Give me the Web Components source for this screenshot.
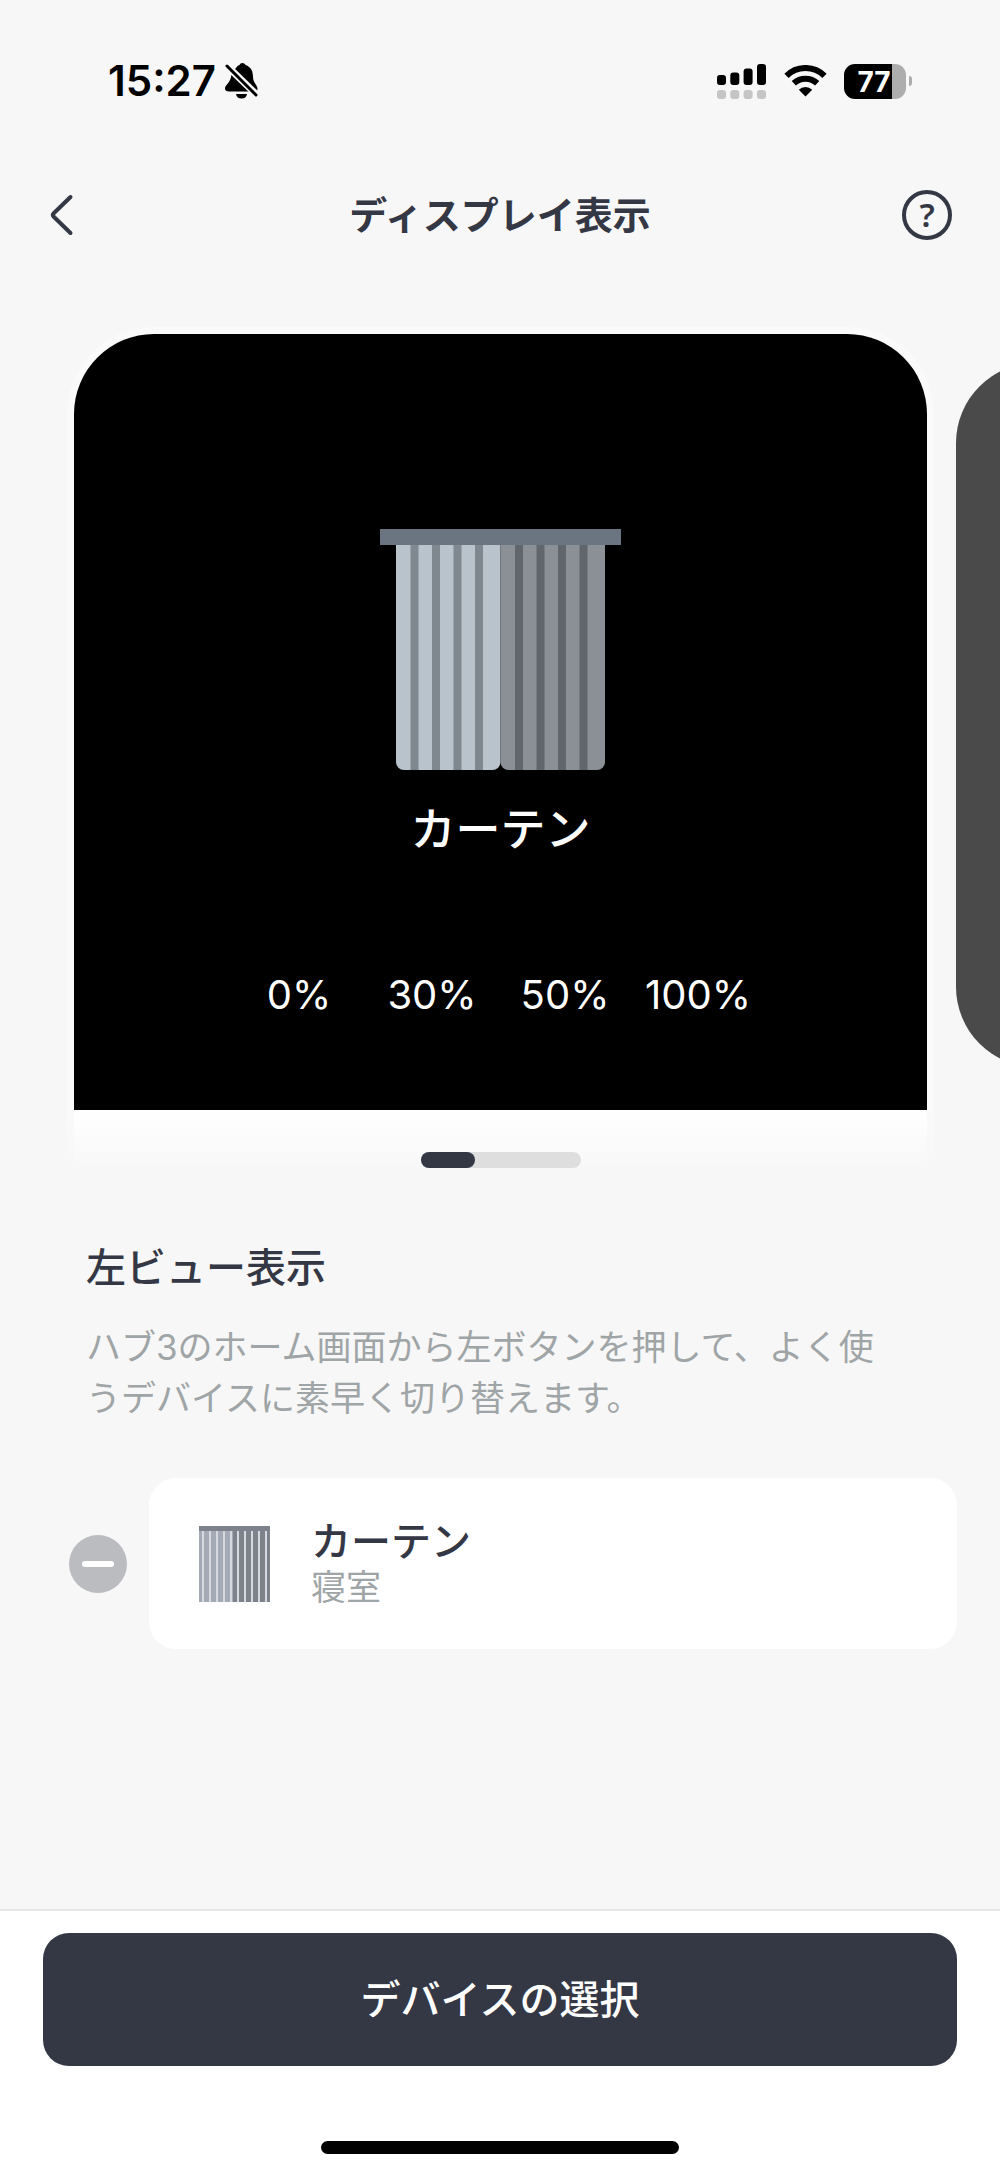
<!DOCTYPE html>
<html lang="ja">
<head>
<meta charset="utf-8">
<meta name="viewport" content="width=device-width, initial-scale=1">
<title>ディスプレイ表示</title>
<style>
  html, body { margin: 0; background: #f7f7f7; }
  body { font-family: Inter, "Noto Sans CJK JP", sans-serif; color: #343845; }
</style>
</head>
<body>
<display-screen></display-screen>
<script>
const define = (name, html) => customElements.define(name, class extends HTMLElement {
  constructor() {
    super();
    this.attachShadow({ mode: "open" }).innerHTML =
      "<style>*{box-sizing:border-box}svg{display:block}button{font:inherit;color:inherit;border:0;background:none;padding:0;margin:0}</style>" + html;
  }
});

define("status-bar", `
  <style>
    :host { display: flex; align-items: center; justify-content: space-between; height: 162px; padding: 0 88px 0 108px; color: #000; }
    .time, .signals { display: flex; align-items: center; }
    .time { font-size: 42px; font-weight: 600; line-height: 48px; gap: 9px; }
    .signals { gap: 17px; }
    .battery { display: flex; align-items: center; gap: 3px; }
    .level { width: 62px; height: 35px; padding-right: 2px; border-radius: 11px; color: #fff; font-size: 28px; font-weight: 700; line-height: 36px; text-align: center; background: linear-gradient(90deg, #000 48px, #adadad 48px); }
    .nub { width: 3px; height: 10px; border-radius: 0 5px 5px 0; background: #adadad; }
  </style>
  <div class="time"><span>15:27</span>
    <svg width="34" height="36" viewBox="0 0 34 36" aria-hidden="true">
      <path d="M11 5C12 3 14 2.300 14.500 2C15 .8 16 0 17.500 0S20 1 20.500 2C26 4 28 8 28 14C28 20 32.500 21.500 32.500 26C32.500 28 31 28.500 29 28.500H4C1.500 28.500 0 27.500 0 25.500C0 22 5 20 6 14C6 11 8 7 11 5Z"/>
      <path d="M11 31H22C21.500 34 19.500 35.500 16.500 35.500S11.500 34 11 31Z"/>
      <path d="M0 1L33 33" stroke="#f7f7f7" stroke-width="7"/>
      <path d="M2 3L31 32" stroke="#000" stroke-width="3" stroke-linecap="round"/>
    </svg>
  </div>
  <div class="signals">
    <svg width="50" height="35" viewBox="0 0 50 35" aria-hidden="true">
      <rect y="11" width="9" height="10" rx="3"/><rect x="13.300" y="8.500" width="9" height="12.500" rx="3"/><rect x="26.600" y="4.500" width="9" height="16.500" rx="3"/><rect x="40" width="9" height="21" rx="3"/>
      <g fill="#c5c5c5"><rect y="26" width="9" height="9" rx="3"/><rect x="13.300" y="26" width="9" height="9" rx="3"/><rect x="26.600" y="26" width="9" height="9" rx="3"/><rect x="40" y="26" width="9" height="9" rx="3"/></g>
    </svg>
    <svg width="43" height="32" viewBox="0 0 43 32" aria-hidden="true">
      <path d="M2.500 10.800A27 27 0 0 1 40.500 10.800M9.800 18.300A17 17 0 0 1 33.200 18.300" fill="none" stroke="#000" stroke-width="6"/>
      <path d="M21.500 31.500L14.800 24.800A9.500 9.500 0 0 1 28.200 24.800Z"/>
    </svg>
    <div class="battery"><div class="level">77</div><div class="nub"></div></div>
  </div>`);

define("nav-header", `
  <style>
    :host { display: grid; grid-template-columns: 50px 1fr 50px; align-items: center; height: 106px; padding: 0 48px; }
    h1 { margin: 0; font-size: 38px; font-weight: 600; line-height: 56px; text-align: center; }
    button { width: 50px; height: 50px; display: flex; align-items: center; }
    .help { justify-content: center; border: 4px solid #343845; border-radius: 50%; font-family: "Noto Sans", sans-serif; font-size: 33px; line-height: 42px; font-weight: 600; }
  </style>
  <button aria-label="戻る"><svg width="26" height="42" viewBox="0 0 26 42" aria-hidden="true"><path d="M22.500 3L5.500 19.500Q4 21 5.500 22.500L22.500 39" fill="none" stroke="#343845" stroke-width="4" stroke-linecap="round" stroke-linejoin="round"/></svg></button>
  <h1><slot></slot></h1>
  <button class="help">?</button>`);

define("curtain-art", `
  <style>:host { display: block; }</style>
  <svg width="241" height="241" viewBox="0 0 241 241" aria-hidden="true">
    <path d="M16 16H120.500V233a8 8 0 0 1-8 8H24a8 8 0 0 1-8-8Z" fill="#b9c3cc"/>
    <path d="M120.500 16H225V233a8 8 0 0 1-8 8H128.500a8 8 0 0 1-8-8Z" fill="#8b9097"/>
    <path d="M30.500 16h8v225h-8zM52 16h8v225h-8zM73.500 16h8v225h-8zM95 16h8v225h-8z" fill="#7f888f"/>
    <path d="M135 16h8v225h-8zM156.500 16h8v225h-8zM178 16h8v225h-8zM199.500 16h8v225h-8z" fill="#60666c"/>
    <path d="M0 0H241V16H0Z" fill="#6b7582"/>
  </svg>`);

define("curtain-icon", `
  <style>:host { display: block; }</style>
  <svg width="71" height="76" viewBox="0 0 71 76" aria-hidden="true">
    <path d="M0 0H36V76H0Z" fill="#a5abb6"/><path d="M34 0H71V76H34Z" fill="#7d828b"/>
    <path d="M3 4h2v72h-2zM10 4h2v72h-2zM17 4h2v72h-2zM24 4h2v72h-2zM31 4h2v72h-2zM38 4h2v72h-2zM45 4h2v72h-2zM52 4h2v72h-2zM59 4h2v72h-2zM66 4h2v72h-2z" fill="#d6dae0"/>
    <path d="M0 0H71V5H0Z" fill="#7d828c"/>
  </svg>`);

define("view-carousel", `
  <style>
    :host { display: flex; align-items: flex-start; gap: 22px; overflow: hidden; padding: 59px 0 0 67px; }
    .frame { flex: 0 0 auto; width: calc(100% - 66px); padding: 7px 7px 0; border-radius: 87px 87px 0 0; background: linear-gradient(#fafafa 780px, #f7f7f7); }
    .panel { height: 776px; padding-top: 195px; border-radius: 80px 80px 0 0; background: #000; color: #fff; display: flex; flex-direction: column; align-items: center; }
    h2 { margin: 26px 0 0; font-size: 45px; line-height: 68px; font-weight: 500; }
    ul { list-style: none; margin: 106px 0 0; padding: 0 4px 0 0; display: grid; grid-template-columns: repeat(4, 133px); justify-items: center; font-size: 40px; line-height: 50px; }
    .fade { height: 62px; padding-top: 42px; background: linear-gradient(#fff, #f7f7f7); }
    .track { width: 160px; height: 16px; margin: 0 auto; border-radius: 8px; background: #dedede; }
    .thumb { width: 54px; height: 16px; border-radius: 8px; background: #343845; }
    .next { flex: 0 0 auto; width: 800px; height: 704px; margin-top: 36px; border-radius: 80px; background: #4a4a4a; }
  </style>
  <div class="frame">
    <div class="panel">
      <curtain-art></curtain-art>
      <h2>カーテン</h2>
      <ul><li>0%</li><li>30%</li><li>50%</li><li>100%</li></ul>
    </div>
    <div class="fade"><div class="track"><div class="thumb"></div></div></div>
  </div>
  <div class="next"></div>`);

define("view-intro", `
  <style>
    :host { display: block; padding: 66px 100px 0 86px; }
    h2 { margin: 0; font-size: 40px; line-height: 60px; font-weight: 500; }
    p { margin: 24px 0 0; font-size: 35px; line-height: 51px; color: #9fa5a6; }
  </style>
  <h2><slot name="title"></slot></h2>
  <p><slot></slot></p>`);

define("device-row", `
  <style>
    :host { display: flex; align-items: center; gap: 22px; padding: 54px 43px 0 69px; }
    .remove { flex: none; width: 58px; height: 58px; border-radius: 50%; background: #bbbcc0; display: flex; align-items: center; justify-content: center; }
    .remove i { width: 32px; height: 6px; border-radius: 3px; background: #fff; }
    .card { flex: 1; height: 171px; border-radius: 27px; background: #fff; display: flex; align-items: center; gap: 41px; padding: 0 50px; }
    .name { font-size: 40px; line-height: 46px; font-weight: 500; }
    .room { font-size: 35px; line-height: 44px; color: #9fa5a6; }
  </style>
  <button class="remove" aria-label="削除"><i></i></button>
  <div class="card">
    <curtain-icon></curtain-icon>
    <div><div class="name"><slot></slot></div><div class="room"><slot name="room"></slot></div></div>
  </div>`);

define("action-bar", `
  <style>
    :host { display: flex; flex-direction: column; align-items: center; padding: 22px 43px 20px; border-top: 2px solid #e6e6e6; background: #fff; }
    button { width: 100%; height: 133px; padding-bottom: 5px; border-radius: 26px; background: #343845; color: #fff; font-size: 40px; font-weight: 500; }
    .home { width: 358px; height: 13px; margin-top: 75px; border-radius: 7px; background: #000; }
  </style>
  <button><slot></slot></button>
  <div class="home"></div>`);

define("display-screen", `
  <style>
    :host { display: flex; flex-direction: column; min-height: 100vh; }
    action-bar { margin-top: auto; }
  </style>
  <status-bar></status-bar>
  <nav-header>ディスプレイ表示</nav-header>
  <view-carousel></view-carousel>
  <view-intro><span slot="title">左ビュー表示</span>ハブ3のホーム画面から左ボタンを押して、よく使うデバイスに素早く切り替えます。</view-intro>
  <device-row>カーテン<span slot="room">寝室</span></device-row>
  <action-bar>デバイスの選択</action-bar>`);
</script>
</body>
</html>
